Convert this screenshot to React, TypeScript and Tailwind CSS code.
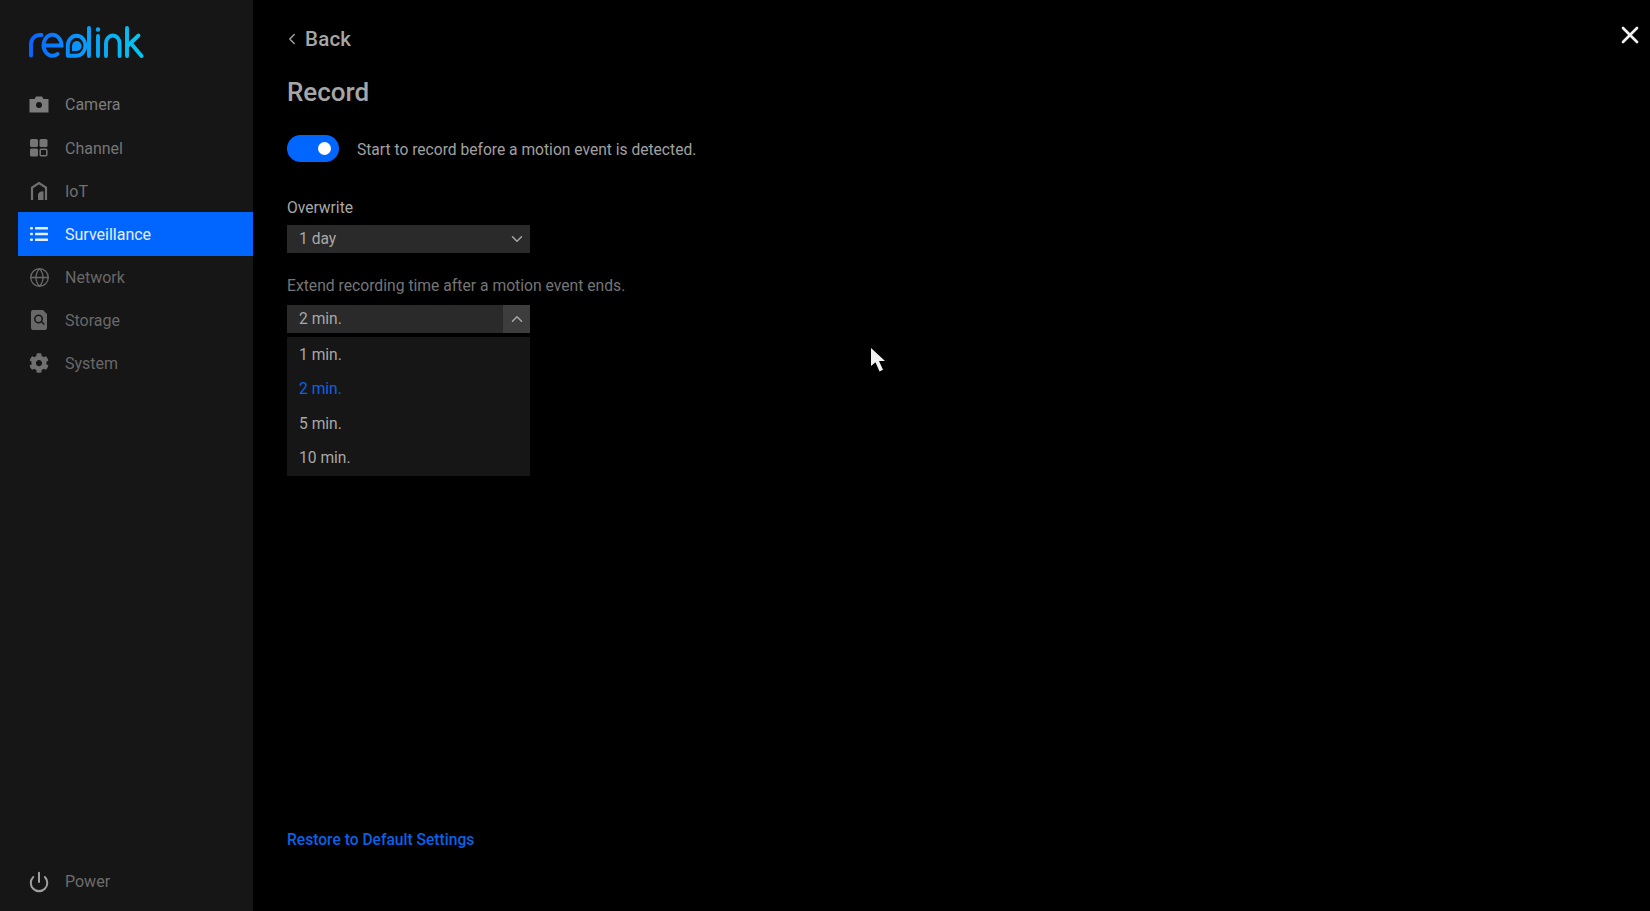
import React from 'react'
import { ChevronDown, ChevronLeft, ChevronUp, Globe, Power, X } from 'lucide-react'
import { FaCog } from 'react-icons/fa'

function Logo() {
  return (
    <svg width="116" height="32" viewBox="0 0 116 32" fill="none" strokeWidth="3.900" strokeLinecap="round" className="block">
      <defs>
        <linearGradient id="logo" x1="0" y1="0" x2="116" y2="0" gradientUnits="userSpaceOnUse">
          <stop offset="0" stopColor="#0a62ff" />
          <stop offset="0.5" stopColor="#0a9dfa" />
          <stop offset="1" stopColor="#05c8ee" />
        </linearGradient>
      </defs>
      <g stroke="url(#logo)">
        <path d="M3 29.500V18a9 9 0 0 1 9-9h1.500" />
        <path d="M16 19.500H33.500A9 10.500 0 1 0 29.500 28" />
        <path d="M39.800 29.700V19.500A8.800 10 0 1 1 48.600 29.700Z" strokeLinejoin="round" />
        <path d="M61 2V30" />
        <path d="M70 10V30" />
        <path d="M78 30V17.500a6.800 8 0 0 1 13.600 0V30" />
        <path d="M99 2V30" />
        <path d="M99.500 20L110.500 9.500" />
        <path d="M103.500 18L113.500 30" />
      </g>
      <circle cx="70" cy="3.500" r="2.200" fill="url(#logo)" />
      <path d="M44 25V19.500a4.800 5 0 1 1 4.800 5.500Z" fill="url(#logo)" />
    </svg>
  )
}

function CameraIcon() {
  return (
    <svg width="20" height="20" viewBox="0 0 20 20" fill="currentColor">
      <path fillRule="evenodd" d="M1 4h4.500l1.500-2.500h6L14.500 4H19.500v13.500H.5V4zM10 7a3 3 0 1 0 0 6 3 3 0 0 0 0-6z" />
    </svg>
  )
}

function ChannelIcon() {
  return (
    <svg width="20" height="20" viewBox="0 0 20 20" fill="currentColor">
      <rect x="1" y="1" width="8" height="8" rx="1.500" />
      <rect x="10.500" y="1" width="8" height="8" rx="1.500" />
      <rect x="1" y="10.500" width="8" height="8" rx="1.500" />
      <rect x="11.200" y="11.200" width="6.600" height="6.600" rx="1" fill="none" stroke="currentColor" strokeWidth="1.500" />
    </svg>
  )
}

function IotIcon() {
  return (
    <svg width="20" height="20" viewBox="0 0 20 20" fill="none" stroke="currentColor" strokeWidth="2.200">
      <path d="M3 19V6.500L10 2l7 4.500V19" />
      <path d="M9 19v-6a5 5 0 0 1 5.500-2.500V19z" fill="currentColor" stroke="none" />
    </svg>
  )
}

function ListIcon() {
  return (
    <svg width="18" height="16" viewBox="0 0 18 16" fill="currentColor">
      <rect x="0" y="1" width="3" height="2.600" rx="1" />
      <rect x="5" y="1" width="13" height="2.600" rx="0.500" />
      <rect x="0" y="6.700" width="3" height="2.600" rx="1" />
      <rect x="5" y="6.700" width="13" height="2.600" rx="0.500" />
      <rect x="0" y="12.400" width="3" height="2.600" rx="1" />
      <rect x="5" y="12.400" width="13" height="2.600" rx="0.500" />
    </svg>
  )
}

function StorageIcon() {
  return (
    <svg width="20" height="20" viewBox="0 0 20 20" fill="currentColor">
      <path fillRule="evenodd" d="M4 0h10l4 4v14a2 2 0 0 1-2 2H4a2 2 0 0 1-2-2V2a2 2 0 0 1 2-2zM9.500 4.500a4.500 4.500 0 1 0 2.800 8l2.500 2.500 1-1-2.500-2.500a4.500 4.500 0 0 0-3.800-7zm0 1.500a3 3 0 1 1 0 6 3 3 0 0 1 0-6z" />
    </svg>
  )
}

const navItems = [
  { label: 'Camera', height: 'h-[43px]', icon: <CameraIcon />, text: 'text-[#7c7c7c]', iconColor: 'text-[#7c7c7c]' },
  { label: 'Channel', height: 'h-[44px]', icon: <ChannelIcon />, text: 'text-[#757575]', iconColor: 'text-[#757575]' },
  { label: 'IoT', height: 'h-[42px]', icon: <IotIcon />, text: 'text-[#707070]', iconColor: 'text-[#707070]' },
  { label: 'Surveillance', height: 'h-[44px]', icon: <ListIcon />, text: 'text-[#e4eeff]', iconColor: 'text-[#e4eeff]', active: true },
  { label: 'Network', height: 'h-[43px]', icon: <Globe size={21} strokeWidth={1.500} />, text: 'text-[#686868]', iconColor: 'text-[#686868]' },
  { label: 'Storage', height: 'h-[42px]', icon: <StorageIcon />, text: 'text-[#686868]', iconColor: 'text-[#686868]' },
  { label: 'System', height: 'h-[44px]', icon: <FaCog size={20} />, text: 'text-[#686868]', iconColor: 'text-[#707070]' },
]

function Select({ value, open }: { value: string; open?: boolean }) {
  return (
    <div className="w-[243px] h-[28px] bg-[#2a2a2a] flex items-center justify-between text-[15.600px] text-[#a8a8a8]">
      <span className="pl-3 pt-[1px]">{value}</span>
      <span className={`w-[27px] h-full flex items-center justify-center ${open ? 'bg-[#3d3d3d]' : ''}`}>
        {open ? <ChevronUp size={18} strokeWidth={2} /> : <ChevronDown size={18} strokeWidth={2} />}
      </span>
    </div>
  )
}

export default function App() {
  return (
    <div className="relative w-full h-[911px] overflow-hidden bg-black flex font-['Roboto',sans-serif]">
      {/* Sidebar */}
      <aside className="w-[253px] h-full shrink-0 bg-[#161616] flex flex-col pl-[18px] pb-[16px]">
        <div className="pl-[10px] pt-[26px] h-[83px]">
          <Logo />
        </div>
        <nav className="flex flex-col">
          {navItems.map(item => (
            <div
              key={item.label}
              className={`${item.height} flex items-center ${item.active ? 'bg-[#0066ff]' : ''}`}
            >
              <span className={`w-[22px] ml-[10px] flex justify-center ${item.iconColor}`}>{item.icon}</span>
              <span className={`ml-[15px] pt-[1px] text-[16px] ${item.text}`}>{item.label}</span>
            </div>
          ))}
        </nav>
        <div className="mt-auto flex items-center h-[26px]">
          <span className="w-[22px] ml-[10px] flex justify-center text-[#a0a0a0]">
            <Power size={22} strokeWidth={2.200} />
          </span>
          <span className="ml-[15px] text-[16px] text-[#6c6c6c]">Power</span>
        </div>
      </aside>

      {/* Main content */}
      <main className="flex-1 h-full flex flex-col pl-[34px] pt-[25px] pb-[59px]">
        <div className="flex items-center h-[28px] text-[#a6a6a6]">
          <ChevronLeft size={18} strokeWidth={1.800} className="-ml-[4px]" />
          <span className="ml-[4px] text-[20.500px] tracking-[0.2px] font-medium">Back</span>
        </div>
        <h1 className="mt-[23px] h-[32px] leading-[32px] text-[26px] font-medium text-[#a6a6a6]">Record</h1>
        <div className="mt-[27px] flex items-center h-[27px]">
          <div className="w-[52px] h-[27px] rounded-full bg-[#0066ff] flex items-center justify-end pr-[8px]">
            <span className="w-[13px] h-[13px] rounded-full bg-white" />
          </div>
          <span className="ml-[18px] pt-[5px] text-[15.600px] text-[#a0a0a0]">
            Start to record before a motion event is detected.
          </span>
        </div>
        <div className="mt-[36px] h-[20px] leading-[20px] text-[15.600px] text-[#a8a8a8]">Overwrite</div>
        <div className="mt-[7px]">
          <Select value="1 day" />
        </div>
        <div className="mt-[23px] h-[20px] leading-[20px] text-[15.700px] text-[#757575]">
          Extend recording time after a motion event ends.
        </div>
        <div className="mt-[9px]">
          <Select value="2 min." open />
        </div>
        <div className="mt-[4px] w-[243px] bg-[#161616] text-[15.600px] text-[#a8a8a8] pt-[1px]">
          <div className="h-[34.500px] flex items-center pl-3">1 min.</div>
          <div className="h-[34.500px] flex items-center pl-3 text-[#0a62e8]">2 min.</div>
          <div className="h-[34.500px] flex items-center pl-3">5 min.</div>
          <div className="h-[34.500px] flex items-center pl-3">10 min.</div>
        </div>
        <div className="mt-auto text-[15.600px] font-medium text-[#0a62e8]">Restore to Default Settings</div>
      </main>

      {/* Close button */}
      <X size={28} strokeWidth={2.300} className="absolute top-[21px] right-[6px] text-[#f0f0f0]" />

      {/* Mouse pointer */}
      <svg width="16" height="26" viewBox="0 0 16 26" className="absolute left-[870px] top-[347px]" fill="#f2f2f2">
        <path d="M1 1V19L5.500 15.200L9.500 24.500L13 22.800L9 14H15Z" />
      </svg>
    </div>
  )
}
